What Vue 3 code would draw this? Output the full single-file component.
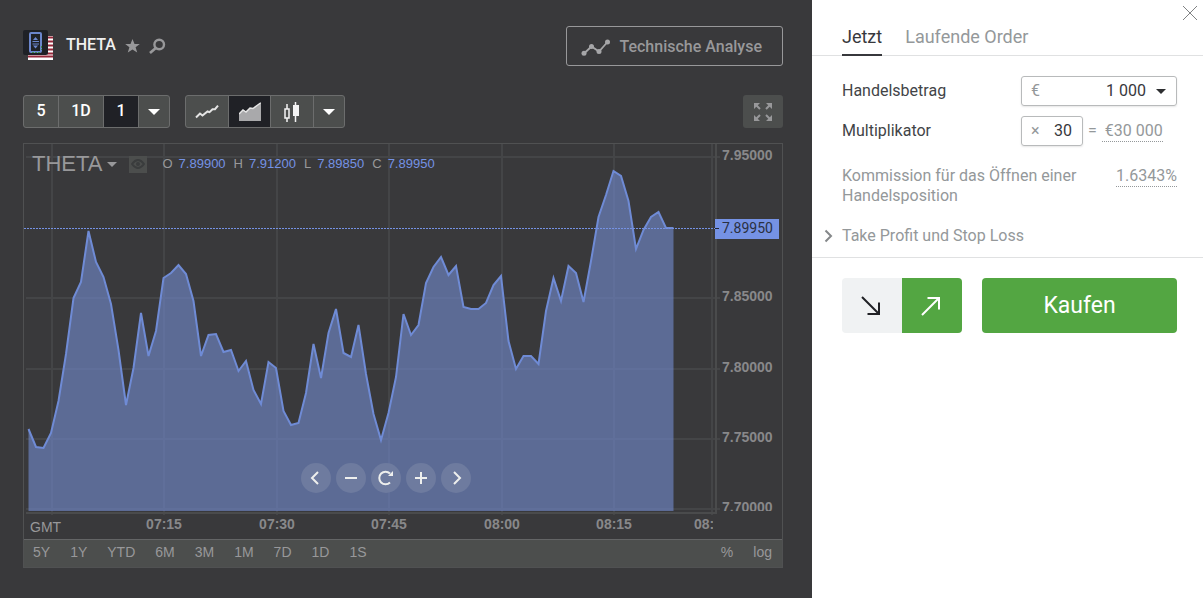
<script setup>
import { ref } from 'vue'

const amount = ref('1 000')
const multiplier = ref('30')

const step = 7.5
const levels = [
  285, 303, 304, 289, 257, 210, 154, 138, 87, 118, 133, 160, 206, 261, 224, 169, 212, 187, 134, 129,
  121, 130, 157, 212, 191, 190, 208, 206, 227, 217, 246, 260, 218, 224, 267, 281, 279, 249, 200, 234,
  189, 165, 209, 213, 181, 230, 270, 296, 269, 233, 170, 191, 181, 139, 123, 113, 131, 122, 163, 165,
  165, 159, 141, 132, 197, 225, 212, 212, 220, 167, 134, 157, 122, 129, 158, 117, 73, 51, 27, 32,
  57, 105, 86, 73, 68, 84, 84,
]
const line = levels.map((y, i) => `${4.5 + i * step},${y}`).join(' ')
const endX = 4.5 + (levels.length - 1) * step
const area = `4.5,367 ${line} ${endX},367`

const prices = [
  { y: 13, label: '7.95000' },
  { y: 154, label: '7.85000' },
  { y: 225, label: '7.80000' },
  { y: 295, label: '7.75000' },
  { y: 365, label: '7.70000' },
]
const times = [
  { x: 28, label: '' },
  { x: 140, label: '07:15' },
  { x: 253, label: '07:30' },
  { x: 365, label: '07:45' },
  { x: 478, label: '08:00' },
  { x: 590, label: '08:15' },
  { x: 688, label: '' },
]
const quotes = [
  ['O', '7.89900'],
  ['H', '7.91200'],
  ['L', '7.89850'],
  ['C', '7.89950'],
]
const ranges = ['5Y', '1Y', 'YTD', '6M', '3M', '1M', '7D', '1D', '1S']
</script>

<template>
  <div class="app">
    <main class="market">
      <header class="head">
        <svg class="logo" width="31" height="31" viewBox="0 0 31 31" aria-hidden="true">
          <rect x="5" y="6" width="25" height="24" fill="#fff" />
          <path d="M5 26.5h25M24 7.5h6M24 11.5h6M24 15.5h6M24 19.5h6M24 23.5h6" stroke="#96283a" stroke-width="2" />
          <path d="M5 28v2h25v-2z" fill="#fff" />
          <rect width="25" height="25" rx="2" fill="#1f2126" />
          <rect x="7" y="3" width="11" height="19" rx="1" fill="none" stroke="#6b86cc" stroke-width="2" />
          <path d="M9.500 11.500h6.500M9.500 14h6.500" stroke="#6b86cc" />
          <path d="M12.500 7l2.500 3h-5zM12.500 18.500l2.500-3h-5z" fill="#6b86cc" />
          <path d="M9 22.5h8M18.5 16v4" stroke="#3f8a4a" stroke-dasharray="2 1" />
        </svg>
        <h1>THETA</h1>
        <button class="icon star" aria-label="Favorit">
          <svg width="15" height="14" viewBox="0 0 15 14"><path d="M7.5 0l2 5h5.3l-4.2 3.3 1.600 5.300-4.700-3.100-4.700 3.100 1.600-5.300L.2 5h5.300z" fill="#98989a" /></svg>
        </button>
        <button class="icon" aria-label="Suche">
          <svg width="17" height="16" viewBox="0 0 17 16" fill="none" stroke="#98989a"><circle cx="10.200" cy="6.500" r="4.800" stroke-width="2.400" /><path d="M6.800 10L1 15" stroke-width="2.600" /></svg>
        </button>
        <button class="analysis">
          <svg width="30" height="17" viewBox="0 0 30 17"><path d="M3 14.500L10.500 7.500 18 12.500 26.500 3" fill="none" stroke="#a6a6a8" stroke-width="1.800" /><g fill="#a6a6a8"><circle cx="3" cy="14.200" r="2.500" /><circle cx="10.500" cy="7.500" r="2.500" /><circle cx="18" cy="12.500" r="2.500" /><circle cx="26.500" cy="3" r="2.500" /></g></svg>
          Technische Analyse
        </button>
      </header>

      <div class="toolbar">
        <div class="group">
          <button>5</button>
          <button class="wide">1D</button>
          <button class="active">1</button>
          <button class="more" aria-label="Weitere Intervalle"><svg width="12" height="6"><path d="M0 0h12L6 6z" fill="#fff" /></svg></button>
        </div>
        <div class="group types">
          <button aria-label="Linie"><svg width="24" height="14" viewBox="0 0 24 14"><path d="M1 12.500l4-4 2.500 2 5-4 2 .7 3-3h2.500l3-3.500" fill="none" stroke="#e4e4e4" stroke-width="2" /></svg></button>
          <button class="active" aria-label="Fläche"><svg width="22" height="19" viewBox="0 0 22 19"><path d="M0 12l4-4 3 2 4-4 3 .5 4-3L22 0v19H0z" fill="#a9a9ab" /><path d="M0 12l4-4 3 2 4-4 3 .5 4-3L21.500 1" fill="none" stroke="#e6e6e6" stroke-width="1.500" /></svg></button>
          <button aria-label="Kerzen"><svg width="18" height="20" viewBox="0 0 18 20"><path d="M4 2v5M4 16v4M12.500 0v20" stroke="#f4f4f4" stroke-width="1.500" /><rect x="2" y="7" width="4" height="9" fill="none" stroke="#f4f4f4" stroke-width="1.500" /><rect x="10" y="3" width="6" height="11" fill="#f4f4f4" /></svg></button>
          <button class="more" aria-label="Weitere Diagrammtypen"><svg width="12" height="6"><path d="M0 0h12L6 6z" fill="#fff" /></svg></button>
        </div>
        <button class="expand" aria-label="Vollbild">
          <svg width="18" height="18" viewBox="0 0 18 18" fill="#98989a" stroke="#98989a" stroke-width="2"><path d="M2 2l4 4M16 2l-4 4M2 16l4-4M16 16l-4-4" /><path d="M0 0h6L0 6zM18 0h-6l6 6zM0 18h6l-6-6zM18 18h-6l6-6z" stroke="none" /></svg>
        </button>
      </div>

      <section class="chart">
        <div class="canvas">
          <svg class="plot" viewBox="0 0 758 395" role="img" aria-label="THETA Kursverlauf">
            <defs>
              <clipPath id="plot-price"><rect x="692" y="0" width="66" height="367" /></clipPath>
              <clipPath id="plot-time"><rect x="0" y="368" width="689" height="27" /></clipPath>
            </defs>
            <g class="grid">
              <line v-for="t in times" :key="t.x" :x1="t.x" :x2="t.x" y1="0" y2="371" />
              <line v-for="p in prices" :key="p.y" x1="2" x2="696" :y1="p.y" :y2="p.y" />
            </g>
            <polygon class="area" :points="area" />
            <polyline class="curve" :points="line" />
            <line class="last" x1="0" x2="691" y1="84.500" y2="84.500" />
            <path class="axis" d="M2 369H692V0" />
            <g class="labels" clip-path="url(#plot-price)">
              <text v-for="p in prices" :key="p.label" x="698" :y="p.y + 3">{{ p.label }}</text>
            </g>
            <g class="labels mid">
              <text v-for="t in times" :key="t.x" :x="t.x" y="385">{{ t.label }}</text>
            </g>
            <g class="labels" clip-path="url(#plot-time)"><text x="670" y="385">08:30</text></g>
            <text class="zone" x="6" y="388">GMT</text>
            <rect x="691" y="75" width="64" height="20" fill="#7592e4" />
            <path d="M691 84.500h4" stroke="#202532" />
            <text class="tag" x="698" y="89">7.89950</text>
          </svg>
          <div class="legend">
            <button class="symbol">THETA<svg width="10" height="5"><path d="M0 0h10L5 5z" fill="#98989a" /></svg></button>
            <button class="eye" aria-label="Einblenden"><svg width="14" height="10" viewBox="0 0 14 10"><path d="M1 5q6-8 12 0q-6 8-12 0z" fill="none" stroke="#3a3c3d" stroke-width="2" /><circle cx="7" cy="5" r="2" fill="#3a3c3d" /></svg></button>
            <dl class="quotes">
              <div v-for="q in quotes" :key="q[0]"><dt>{{ q[0] }}</dt><dd>{{ q[1] }}</dd></div>
            </dl>
          </div>
          <div class="controls">
            <button aria-label="Zurück"><svg viewBox="0 0 30 30"><path d="M17 9l-6 6 6 6" /></svg></button>
            <button aria-label="Verkleinern"><svg viewBox="0 0 30 30"><path d="M9 15h12" stroke-width="3" /></svg></button>
            <button aria-label="Zurücksetzen"><svg viewBox="0 0 30 30"><path d="M19 19.500a6.300 6.300 0 1 1 0-9" /><path class="tip" d="M22 8v5h-5z" /></svg></button>
            <button aria-label="Vergrößern"><svg viewBox="0 0 30 30"><path d="M9 15h12M15 9v12" stroke-width="3" /></svg></button>
            <button aria-label="Vor"><svg viewBox="0 0 30 30"><path d="M13 9l6 6-6 6" /></svg></button>
          </div>
        </div>
        <footer class="ranges">
          <button v-for="r in ranges" :key="r">{{ r }}</button>
          <button class="percent">%</button>
          <button>log</button>
        </footer>
      </section>
    </main>

    <aside class="order">
      <button class="close" aria-label="Schließen"><svg width="14" height="14" viewBox="0 0 14 14"><path d="M0 0l14 14M14 0L0 14" stroke="#808284" /></svg></button>
      <nav class="tabs">
        <button class="current">Jetzt</button>
        <button>Laufende Order</button>
      </nav>
      <form class="form" @submit.prevent>
        <div class="row">
          <label for="amount">Handelsbetrag</label>
          <div class="field amount">
            <span>€</span>
            <select id="amount" v-model="amount"><option>1 000</option></select>
            <svg width="10" height="5"><path d="M0 0h10L5 5z" fill="#2d2e30" /></svg>
          </div>
        </div>
        <div class="row">
          <label for="multiplier">Multiplikator</label>
          <div class="product">
            <div class="field multi"><span>×</span><input id="multiplier" v-model="multiplier" type="text" /></div>
            <span>=</span>
            <span class="dotted total">€30 000</span>
          </div>
        </div>
        <div class="row fee">
          <p>Kommission für das Öffnen einer Handelsposition</p>
          <span class="dotted">1.6343%</span>
        </div>
        <button type="button" class="limits">
          <svg width="9" height="14" viewBox="0 0 9 14"><path d="M1.500 1.500L7 7l-5.500 5.500" fill="none" stroke="#85888a" stroke-width="2" /></svg>
          Take Profit und Stop Loss
        </button>
      </form>
      <div class="actions">
        <div class="direction">
          <button aria-label="Fallend"><svg width="22" height="20" viewBox="0 0 22 20"><path d="M1 1l17 17M6.500 18H18V6.500" fill="none" stroke="#202125" stroke-width="2" /></svg></button>
          <button class="up" aria-label="Steigend"><svg width="22" height="20" viewBox="0 0 22 20"><path d="M1 19L18 2M6.500 2H18v11.500" fill="none" stroke="#fff" stroke-width="2" /></svg></button>
        </div>
        <button class="buy">Kaufen</button>
      </div>
    </aside>
  </div>
</template>

<style>
body {
  margin: 0;
  background: #fff;
}
</style>

<style scoped>
* {
  box-sizing: border-box;
}
.app {
  display: flex;
  min-height: 100vh;
  font: 16px/20px Roboto, sans-serif;
}
button {
  margin: 0;
  padding: 0;
  border: 0;
  background: none;
  color: inherit;
  font: inherit;
  cursor: pointer;
}
svg {
  display: block;
  flex: none;
}
.market {
  flex: 1;
  min-width: 0;
  padding: 26px 29px 30px 23px;
  background: #39393b;
  color: #98989a;
}
.head {
  display: flex;
  align-items: center;
  height: 40px;
}
.logo {
  margin-bottom: 2px;
}
h1 {
  margin: 0 9px 2px 12px;
  color: #f0f0f0;
  font-size: 16px;
  font-weight: 500;
}
.icon {
  margin-right: 9px;
}
.analysis {
  display: flex;
  align-items: center;
  gap: 8px;
  height: 40px;
  margin-left: auto;
  padding: 2px 20px 0 14px;
  border: 1px solid #98989a;
  border-radius: 3px;
  font-weight: 500;
}
.toolbar {
  display: flex;
  gap: 15px;
  height: 33px;
  margin: 29px 0 15px;
}
.group {
  display: flex;
  overflow: hidden;
  border: 1px solid #6c6d6d;
  border-radius: 3px;
  background: #4c4e4d;
  color: #fff;
  font-weight: 500;
}
.group button {
  display: flex;
  align-items: center;
  justify-content: center;
  width: 35px;
  padding-bottom: 2px;
  border-right: 1px solid #6c6d6d;
}
.group .wide {
  width: 45px;
}
.types button {
  width: 43px;
  padding-bottom: 0;
}
.types .active {
  width: 42px;
}
.group .more {
  width: 30px;
  padding-bottom: 0;
  border-right: 0;
}
.group .active {
  background: #202126;
}
.expand {
  display: flex;
  align-items: center;
  justify-content: center;
  width: 40px;
  margin-left: auto;
  border-radius: 3px;
  background: #4c4e4d;
}
.chart {
  border: 1px solid #505152;
}
.canvas {
  position: relative;
}
.plot {
  width: 100%;
  height: auto;
}
.grid {
  stroke: #444547;
  stroke-width: 2;
}
.area {
  fill: #7189cb;
  fill-opacity: 0.63;
}
.curve {
  fill: none;
  stroke: #6f8bd5;
  stroke-width: 2;
}
.last {
  stroke: #7592e4;
  stroke-dasharray: 2 1;
}
.axis {
  fill: none;
  stroke: #4a4b4c;
  stroke-width: 2;
}
.labels {
  fill: #88888a;
  font: bold 14px "Liberation Sans", Arial, sans-serif;
}
.mid {
  text-anchor: middle;
}
.zone {
  fill: #98989a;
  font: 14px "Liberation Sans", Arial, sans-serif;
}
.tag {
  fill: #2a3041;
  font: 14px Roboto, sans-serif;
}
.legend {
  position: absolute;
  top: 8px;
  left: 8px;
  display: flex;
  align-items: center;
  font: 13px/24px "Liberation Sans", Arial, sans-serif;
}
.symbol {
  display: flex;
  align-items: center;
  gap: 5px;
  margin-right: 12px;
  font-size: 22px;
}
.eye {
  display: flex;
  align-items: center;
  justify-content: center;
  width: 18px;
  height: 17px;
  background: #4c4e4d;
}
.quotes {
  display: flex;
  gap: 8px;
  margin: 0 0 0 15px;
}
.quotes div {
  display: flex;
  gap: 6px;
}
.quotes dd {
  margin: 0;
  color: #7592e4;
}
.controls {
  position: absolute;
  right: 0;
  bottom: 46px;
  left: 0;
  display: flex;
  justify-content: center;
  gap: 5px;
  padding-right: 34px;
}
.controls button {
  width: 30px;
  height: 30px;
  border-radius: 50%;
  background: #6e7b9f;
}
.controls path {
  fill: none;
  stroke: #eeefed;
  stroke-width: 2;
}
.controls .tip {
  fill: #eeefed;
  stroke: none;
}
.ranges {
  display: flex;
  gap: 20px;
  height: 28px;
  padding: 0 10px 4px 9px;
  border-top: 1px solid #646566;
  background: #4c4e4d;
  font: 14px/24px "Liberation Sans", Arial, sans-serif;
}
.percent {
  margin-left: auto;
}
.order {
  position: relative;
  width: 391px;
  color: #424447;
}
.close {
  position: absolute;
  top: 6px;
  right: 6px;
}
.tabs {
  display: flex;
  align-items: flex-end;
  gap: 23px;
  height: 56px;
  padding-left: 30px;
  border-bottom: 1px solid #e0e1e2;
  color: #94989a;
  font-size: 18px;
}
.tabs button {
  height: 37px;
  margin-bottom: -1px;
  border-bottom: 2px solid transparent;
}
.tabs .current {
  border-color: #37383c;
  color: #37383c;
}
.form {
  padding: 20px 26px 11px 30px;
  border-bottom: 1px solid #e0e1e2;
}
.row {
  display: flex;
  align-items: flex-start;
  justify-content: space-between;
  margin-bottom: 10px;
}
.row label {
  line-height: 29px;
}
.field {
  display: flex;
  align-items: center;
  height: 30px;
  padding: 0 10px 0 9px;
  border: 1px solid #b8babb;
  border-radius: 3px;
  box-shadow: 0 1px 2px #0000001a;
}
.field span,
.product {
  color: #94989a;
}
.amount {
  width: 156px;
}
.multi {
  width: 62px;
}
.field select,
.field input {
  flex: 1;
  min-width: 0;
  padding: 0;
  border: 0;
  appearance: none;
  outline: 0;
  background: none;
  color: #37383c;
  font: inherit;
  text-align: right;
  text-align-last: right;
}
.amount svg {
  margin-left: 10px;
}
.product {
  display: flex;
  align-items: center;
  gap: 5px;
  width: 156px;
}
.dotted {
  border-bottom: 1px dotted #94989a;
}
.total {
  padding: 0 0 0 3px;
}
.fee {
  margin: 20px 0 20px;
  color: #94989a;
}
.fee p {
  width: 250px;
  margin: 0;
}
.limits {
  display: flex;
  align-items: center;
  gap: 9px;
  margin-left: -18px;
  color: #94989a;
}
.actions {
  display: flex;
  gap: 20px;
  height: 55px;
  margin: 20px 26px 0 30px;
}
.direction {
  display: flex;
  overflow: hidden;
  border-radius: 4px;
  background: #f0f2f3;
}
.direction button {
  display: flex;
  align-items: center;
  justify-content: center;
  width: 60px;
}
.up,
.buy {
  background: #53a642;
}
.buy {
  flex: 1;
  border-radius: 4px;
  color: #fff;
  font-size: 23px;
}
</style>
